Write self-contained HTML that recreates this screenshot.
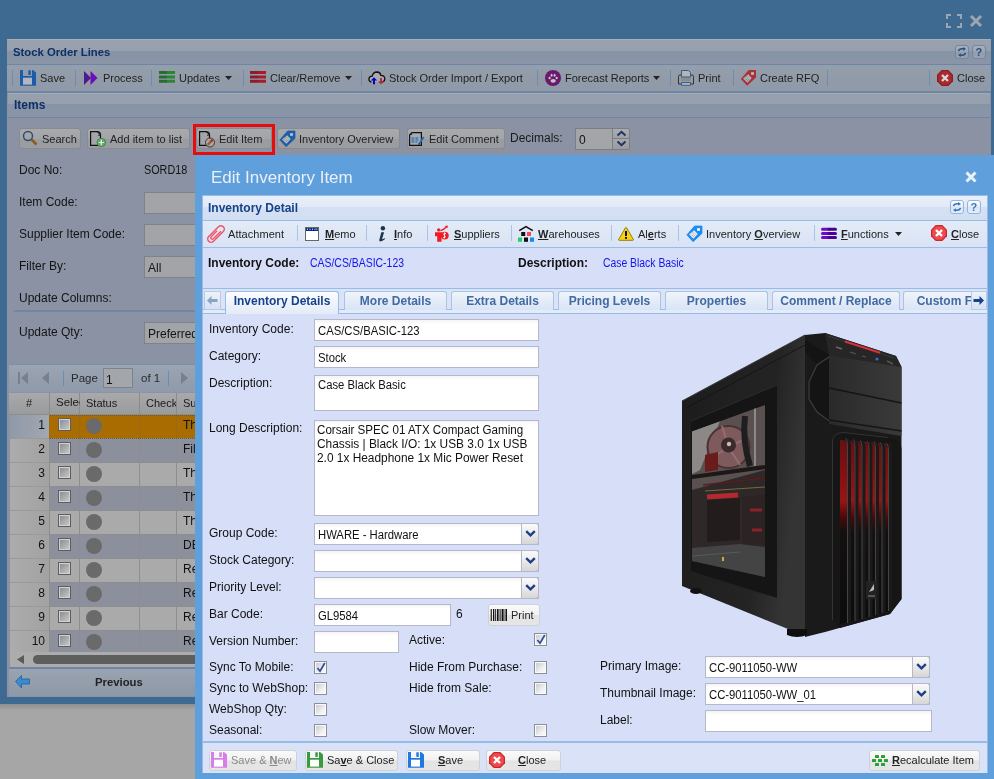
<!DOCTYPE html>
<html><head><meta charset="utf-8"><style>
*{margin:0;padding:0;box-sizing:border-box}
html,body{width:994px;height:779px;overflow:hidden;background:#a6a6a6;font-family:"Liberation Sans",sans-serif}
body{will-change:transform}
div{position:absolute}
.t{white-space:pre}
svg{position:absolute;overflow:visible}
.ul{text-decoration:underline;font-weight:bold}
</style></head>
<body>
<div style="left:0px;top:0px;width:994px;height:704px;background:#3e6a92"></div>
<svg style="left:946px;top:14px" width="16" height="14" viewBox="0 0 16 14"><path d="M1 5V1h4M11 1h4v4M15 9v4h-4M5 13H1V9" fill="none" stroke="#9ba6b1" stroke-width="2"/></svg>
<svg style="left:969px;top:14px" width="14" height="14" viewBox="0 0 14 14"><path d="M2 2L12 12M12 2L2 12" stroke="#9ba6b1" stroke-width="3"/></svg>
<div style="left:7px;top:39px;width:984px;height:658px;background:#8a92a4;border-top:1px solid #a8aeb6"></div>
<div style="left:7px;top:40px;width:984px;height:25px;background:linear-gradient(#98a1ad 0,#97a0ac 45%,#8592a6 46%,#8794a6 52%,#8a96a8 100%);border-bottom:1px solid #6c86a9"></div>
<div class="t" style="left:13px;top:46.93px;font-size:11.3px;line-height:11.3px;color:#0f2f66;font-weight:bold;">Stock Order Lines</div>
<div style="left:955px;top:45px;width:14px;height:14px;background:linear-gradient(#a9b0ba,#9aa3af 50%,#929cab 51%,#98a2b0);border:1px solid #6f88aa;border-radius:3px"></div>
<svg style="left:957px;top:47px" width="10" height="10" viewBox="0 0 10 10"><path d="M1.5 4.2Q2 1.8 5 1.8H7" fill="none" stroke="#2d4f7c" stroke-width="1.5"/><path d="M6.2 0L9 1.9L6.2 3.8Z" fill="#2d4f7c"/><path d="M8.5 5.8Q8 8.2 5 8.2H3" fill="none" stroke="#2d4f7c" stroke-width="1.5"/><path d="M3.8 6.2L1 8.1L3.8 10Z" fill="#2d4f7c"/></svg>
<div style="left:972px;top:45px;width:14px;height:14px;background:linear-gradient(#a9b0ba,#9aa3af 50%,#929cab 51%,#98a2b0);border:1px solid #6f88aa;border-radius:3px"></div>
<div class="t" style="left:975.5px;top:47.19px;font-size:11px;line-height:11px;color:#2d4f7c;font-weight:bold;">?</div>
<div style="left:7px;top:65px;width:984px;height:28px;background:linear-gradient(#959eab,#8f99a7);border-bottom:2px solid #6c86a9"></div>
<div style="left:12px;top:70px;width:1px;height:16px;background:#6c8cb2"></div>
<div style="left:75px;top:70px;width:1px;height:16px;background:#6c8cb2"></div>
<div style="left:151px;top:70px;width:1px;height:16px;background:#6c8cb2"></div>
<div style="left:243px;top:70px;width:1px;height:16px;background:#6c8cb2"></div>
<div style="left:361px;top:70px;width:1px;height:16px;background:#6c8cb2"></div>
<div style="left:537px;top:70px;width:1px;height:16px;background:#6c8cb2"></div>
<div style="left:670px;top:70px;width:1px;height:16px;background:#6c8cb2"></div>
<div style="left:733px;top:70px;width:1px;height:16px;background:#6c8cb2"></div>
<div style="left:827px;top:70px;width:1px;height:16px;background:#6c8cb2"></div>
<div style="left:929px;top:70px;width:1px;height:16px;background:#6c8cb2"></div>
<svg style="left:20px;top:70px" width="16" height="16" viewBox="0 0 16 16"><rect x="3" y="7.5" width="9.5" height="7" fill="#b3b6bc"/><path d="M0 0H3V6H12V0H13L16 2.6V15.8H0Z" fill="#1c5ca8"/><rect x="3" y="7.7" width="9" height="6.9" fill="#b3b6bc"/><rect x="8.3" y="0.3" width="2.5" height="4.6" fill="#1c5ca8"/></svg>
<div class="t" style="left:40px;top:72.69px;font-size:11px;line-height:11px;color:#222;font-weight:normal;">Save</div>
<svg style="left:84px;top:71px" width="14" height="15" viewBox="0 0 14 15"><path d="M0 0L7 7L0 14Z" fill="#4a1c8c"/><path d="M6.5 0L13.5 7L6.5 14Z" fill="#6e0eb8"/></svg>
<div class="t" style="left:103px;top:72.69px;font-size:11px;line-height:11px;color:#222;font-weight:normal;">Process</div>
<svg style="left:159px;top:71px" width="16" height="14" viewBox="0 0 16 14"><g stroke-width="3"><path d="M0 1.5H8M0 5.9H8M0 10.3H8" stroke="#2b6a33"/><path d="M8 1.5H16M8 5.9H16M8 10.3H16" stroke="#2a8630"/></g></svg>
<div class="t" style="left:179px;top:72.69px;font-size:11px;line-height:11px;color:#222;font-weight:normal;">Updates</div>
<svg style="left:225px;top:76px" width="7" height="4" viewBox="0 0 7 4"><path d="M0 0h7L3.5 4z" fill="#222"/></svg>
<svg style="left:250px;top:71px" width="16" height="14" viewBox="0 0 16 14"><g stroke-width="3"><path d="M0 1.5H8M0 5.9H8M0 10.3H8" stroke="#8a1c2c"/><path d="M8 1.5H16M8 5.9H16M8 10.3H16" stroke="#a81c2a"/></g></svg>
<div class="t" style="left:270px;top:72.69px;font-size:11px;line-height:11px;color:#222;font-weight:normal;">Clear/Remove</div>
<svg style="left:345px;top:76px" width="7" height="4" viewBox="0 0 7 4"><path d="M0 0h7L3.5 4z" fill="#222"/></svg>
<svg style="left:368px;top:71px" width="18" height="14" viewBox="0 0 18 14"><path d="M3.5 11Q0.5 10.5 1 7.5Q1.6 5 4.2 5.2Q5 1 9 1Q12.4 1.2 12.8 4.3Q16.6 4.3 16.8 7.8Q16.8 10.8 14 11" fill="#a9abb0" stroke="#111" stroke-width="1.3"/><path d="M6 13.2V8.5" stroke="#0000c8" stroke-width="2"/><path d="M2.8 9.5L6 6.3L9.2 9.5Z" fill="#0000c8"/><path d="M13 7V11" stroke="#b03038" stroke-width="2"/><path d="M9.8 10.2L13 13.4L16.2 10.2Z" fill="#b03038"/></svg>
<div class="t" style="left:389px;top:72.69px;font-size:11px;line-height:11px;color:#222;font-weight:normal;">Stock Order Import / Export</div>
<svg style="left:545px;top:70px" width="16" height="16" viewBox="0 0 16 16"><circle cx="8" cy="8" r="8" fill="#6a1a6c"/><ellipse cx="8.2" cy="10.8" rx="2.6" ry="1.9" fill="#c9c3cb"/><ellipse cx="4.6" cy="8" rx="1.1" ry="1.3" fill="#c9c3cb"/><ellipse cx="6.6" cy="5.3" rx="1" ry="1.5" fill="#c9c3cb"/><ellipse cx="9.6" cy="5.3" rx="1" ry="1.5" fill="#c9c3cb"/><ellipse cx="11.7" cy="8" rx="1.1" ry="1.3" fill="#c9c3cb"/></svg>
<div class="t" style="left:565px;top:72.69px;font-size:11px;line-height:11px;color:#222;font-weight:normal;">Forecast Reports</div>
<svg style="left:653px;top:76px" width="7" height="4" viewBox="0 0 7 4"><path d="M0 0h7L3.5 4z" fill="#222"/></svg>
<svg style="left:678px;top:70px" width="16" height="16" viewBox="0 0 16 16"><path d="M0.5 6.5Q0.5 5 2 5H14Q15.5 5 15.5 6.5V14H0.5Z" fill="#9a9ca0" stroke="#333" stroke-width="1"/><rect x="3" y="7" width="10" height="4" fill="#8a8c90"/><path d="M3.5 0.5H10.5L12.5 2.5V7H3.5Z" fill="#b4b4b4" stroke="#2f5f9a" stroke-width="1"/><path d="M3.5 12.5H12.5V15.3H3.5Z" fill="#b4b4b4" stroke="#2f5f9a" stroke-width="1"/></svg>
<div class="t" style="left:698px;top:72.69px;font-size:11px;line-height:11px;color:#222;font-weight:normal;">Print</div>
<svg style="left:740px;top:69px" width="17" height="17" viewBox="0 0 17 17"><path d="M8.6 1H16V8.4L7.1 16.7L0.9 9.9Z" fill="#a8323a"/><rect x="11.1" y="3.2" width="2.8" height="2.6" fill="#b8c0c6"/><path d="M8.2 5.3L11.7 9L7.4 13.8L3.1 9.5Z" fill="#b0b8be"/><path d="M5 9.5l3-3M6 10.8l3-3M7 12l3-3" stroke="#555" stroke-width="0.8" stroke-dasharray="1 1"/></svg>
<div class="t" style="left:760px;top:72.69px;font-size:11px;line-height:11px;color:#222;font-weight:normal;">Create RFQ</div>
<svg style="left:937px;top:70px" width="16" height="16" viewBox="0 0 16 16"><path d="M4.7 0h6.6L16 4.7v6.6L11.3 16H4.7L0 11.3V4.7z" fill="#8e1e22"/><path d="M5.2 1.3h5.6l3.9 3.9v5.6l-3.9 3.9H5.2l-3.9-3.9V5.2z" fill="#a82a2e"/><path d="M5 5l6 6M11 5l-6 6" stroke="#d8d8d8" stroke-width="2.4"/></svg>
<div class="t" style="left:957px;top:72.69px;font-size:11px;line-height:11px;color:#222;font-weight:normal;">Close</div>
<div style="left:8px;top:93px;width:982px;height:25px;background:linear-gradient(#a5abb3 0,#a5abb3 4%,#97a0ac 5%,#96a0ac 44%,#8592a6 45%,#8794a6 50%,#8a96a8 100%);border-bottom:1px solid #6c86a9"></div>
<div class="t" style="left:14px;top:99.34px;font-size:12px;line-height:12px;color:#0f2f66;font-weight:bold;">Items</div>
<div style="left:19px;top:128px;width:62px;height:21px;background:linear-gradient(#a7a9ad 0,#a3a5a9 50%,#9a9ca0 51%,#9b9da1 100%);border:1px solid #878b92;border-radius:3px"></div>
<svg style="left:22px;top:130px" width="16" height="16" viewBox="0 0 16 16"><circle cx="6" cy="6" r="4.5" fill="none" stroke="#2f4f70" stroke-width="1.5"/><path d="M9.5 9.5L14.5 14.5" stroke="#8a5a22" stroke-width="2.5"/></svg>
<div class="t" style="left:42px;top:133.69px;font-size:11px;line-height:11px;color:#222;font-weight:normal;">Search</div>
<div style="left:87px;top:128px;width:103px;height:21px;background:linear-gradient(#a7a9ad 0,#a3a5a9 50%,#9a9ca0 51%,#9b9da1 100%);border:1px solid #878b92;border-radius:3px"></div>
<svg style="left:90px;top:131px" width="17" height="17" viewBox="0 0 17 17"><path d="M0.6 0.6H7.5L10.5 3.6V14.4H0.6Z" fill="#a3a5a9" stroke="#111" stroke-width="1.2"/><path d="M7.5 1.2Q10.8 0 10.2 3.4Q9.5 5 8.2 4.2" fill="none" stroke="#111" stroke-width="1"/><circle cx="11.3" cy="11.5" r="4.6" fill="#2a8a3a"/><circle cx="11.3" cy="11.5" r="3.3" fill="none" stroke="#b8c8b8" stroke-width="0.6"/><path d="M11.3 8.8v5.4M8.6 11.5h5.4" stroke="#dde5dd" stroke-width="1.7"/></svg>
<div class="t" style="left:110px;top:133.69px;font-size:11px;line-height:11px;color:#222;font-weight:normal;">Add item to list</div>
<div style="left:196px;top:128px;width:76px;height:21px;background:linear-gradient(#a7a9ad 0,#a3a5a9 50%,#9a9ca0 51%,#9b9da1 100%);border:1px solid #878b92;border-radius:3px"></div>
<svg style="left:199px;top:131px" width="17" height="17" viewBox="0 0 17 17"><path d="M0.6 0.6H7.5L10.5 3.6V14.4H0.6Z" fill="#a3a5a9" stroke="#111" stroke-width="1.2"/><path d="M7.5 1.2Q10.8 0 10.2 3.4Q9.5 5 8.2 4.2" fill="none" stroke="#111" stroke-width="1"/><circle cx="11" cy="11.5" r="4.5" fill="#a6a8ac" stroke="#4a3030" stroke-width="1"/><path d="M8.8 13.8L12.8 9.6" stroke="#9a5a20" stroke-width="2.2"/><path d="M12 10.4L13.6 8.8" stroke="#c02020" stroke-width="2.2"/></svg>
<div class="t" style="left:219px;top:133.69px;font-size:11px;line-height:11px;color:#222;font-weight:normal;">Edit Item</div>
<div style="left:193px;top:124px;width:82px;height:31px;border:3px solid #ea0b0b"></div>
<div style="left:277px;top:128px;width:123px;height:21px;background:linear-gradient(#a7a9ad 0,#a3a5a9 50%,#9a9ca0 51%,#9b9da1 100%);border:1px solid #878b92;border-radius:3px"></div>
<svg style="left:279px;top:130px" width="17" height="17" viewBox="0 0 17 17"><path d="M8.6 1H16V8.4L7.1 16.7L0.9 9.9Z" fill="#1f5ea8" stroke="#1f5ea8" stroke-width="0.8" stroke-linejoin="round"/><rect x="11.1" y="3.2" width="2.8" height="2.6" fill="#c0c4c8"/><path d="M8.2 5.3L11.7 9L7.4 13.8L3.1 9.5Z" fill="#b8bcc0"/><path d="M5 9.5l3-3M6 10.8l3-3M7 12l3-3" stroke="#6a6a6a" stroke-width="0.8" stroke-dasharray="1 1"/></svg>
<div class="t" style="left:299px;top:133.69px;font-size:11px;line-height:11px;color:#222;font-weight:normal;">Inventory Overview</div>
<div style="left:407px;top:128px;width:98px;height:21px;background:linear-gradient(#a7a9ad 0,#a3a5a9 50%,#9a9ca0 51%,#9b9da1 100%);border:1px solid #878b92;border-radius:3px"></div>
<svg style="left:409px;top:132px" width="16" height="14" viewBox="0 0 16 14"><path d="M3 0.6H12.4V13.4H0.6V3Z" fill="#a8aaae" stroke="#111" stroke-width="1.2"/><path d="M0.6 3H3V0.6Z" fill="#222"/><g fill="#1f6fc0"><rect x="2.4" y="5.4" width="3" height="1.2"/><rect x="6.4" y="5.4" width="3" height="1.2"/><rect x="2.4" y="7.4" width="3" height="1.2"/><rect x="6.4" y="7.4" width="3" height="1.2"/><rect x="2.4" y="9.4" width="3" height="1.2"/><rect x="6.4" y="9.4" width="2" height="1.2"/></g><path d="M10.3 11.6L14.8 5" stroke="#1f6fc0" stroke-width="1.8"/><circle cx="10.1" cy="12" r="0.8" fill="#111"/></svg>
<div class="t" style="left:429px;top:133.69px;font-size:11px;line-height:11px;color:#222;font-weight:normal;">Edit Comment</div>
<div class="t" style="left:510px;top:131.84px;font-size:12px;line-height:12px;color:#1a1a1a;font-weight:normal;">Decimals:</div>
<div style="left:575px;top:128px;width:38px;height:22px;background:#a4a5a8;border:1px solid #7b7e84"></div>
<div class="t" style="left:579px;top:133.84px;font-size:12px;line-height:12px;color:#111;font-weight:normal;">0</div>
<div style="left:612px;top:128px;width:18px;height:11px;background:linear-gradient(#abadb1,#9fa1a5);border:1px solid #7b7e84;border-radius:0 2px 0 0"></div>
<div style="left:612px;top:138px;width:18px;height:12px;background:linear-gradient(#a5a7ab,#9a9ca0);border:1px solid #7b7e84;border-radius:0 0 2px 0"></div>
<svg style="left:616px;top:130px" width="11" height="18" viewBox="0 0 11 18"><path d="M1.5 5.5L5.5 1.8L9.5 5.5M1.5 11.5L5.5 15.2L9.5 11.5" fill="none" stroke="#1f3466" stroke-width="2"/></svg>
<div class="t" style="left:19px;top:163.84px;font-size:12px;line-height:12px;color:#141414;font-weight:normal;">Doc No:</div>
<div class="t" style="left:144px;top:163.84px;font-size:12px;line-height:12px;color:#141414;font-weight:normal;transform:scaleX(0.9);transform-origin:0 0;">SORD18</div>
<div class="t" style="left:19px;top:195.84px;font-size:12px;line-height:12px;color:#141414;font-weight:normal;">Item Code:</div>
<div style="left:144px;top:192px;width:60px;height:22px;background:#a2a4a8;border:1px solid #7f8389"></div>
<div class="t" style="left:19px;top:227.84px;font-size:12px;line-height:12px;color:#141414;font-weight:normal;">Supplier Item Code:</div>
<div style="left:144px;top:224px;width:60px;height:22px;background:#a2a4a8;border:1px solid #7f8389"></div>
<div class="t" style="left:19px;top:259.84px;font-size:12px;line-height:12px;color:#141414;font-weight:normal;">Filter By:</div>
<div style="left:144px;top:256px;width:60px;height:22px;background:#a2a4a8;border:1px solid #7f8389"></div>
<div class="t" style="left:148px;top:261.84px;font-size:12px;line-height:12px;color:#141414;font-weight:normal;">All</div>
<div class="t" style="left:19px;top:291.84px;font-size:12px;line-height:12px;color:#141414;font-weight:normal;">Update Columns:</div>
<div style="left:14px;top:310px;width:185px;height:2px;background:#6f86a6"></div>
<div class="t" style="left:19px;top:325.84px;font-size:12px;line-height:12px;color:#141414;font-weight:normal;">Update Qty:</div>
<div style="left:144px;top:322px;width:60px;height:22px;background:#a2a4a8;border:1px solid #7f8389"></div>
<div class="t" style="left:148px;top:327.84px;font-size:12px;line-height:12px;color:#141414;font-weight:normal;">Preferred</div>
<div style="left:9px;top:364px;width:190px;height:28px;background:linear-gradient(#9aa4b2,#8f9aaa);border-top:1px solid #7c90ab"></div>
<svg style="left:18px;top:371px" width="11" height="14" viewBox="0 0 11 14"><rect x="0" y="1" width="2" height="12" fill="#77808c"/><path d="M10 1v12L3 7z" fill="#77808c"/></svg>
<svg style="left:42px;top:371px" width="8" height="14" viewBox="0 0 8 14"><path d="M7 1v12L0 7z" fill="#77808c"/></svg>
<div style="left:63px;top:371px;width:1px;height:15px;background:#6c8cb2"></div>
<div class="t" style="left:71px;top:372.77px;font-size:11.5px;line-height:11.5px;color:#2a2a2a;font-weight:normal;">Page</div>
<div style="left:103px;top:368px;width:30px;height:20px;background:#a3a6ab;border:1px solid #7f8389"></div>
<div class="t" style="left:106px;top:373.84px;font-size:12px;line-height:12px;color:#111;font-weight:normal;">1</div>
<div class="t" style="left:141px;top:372.77px;font-size:11.5px;line-height:11.5px;color:#2a2a2a;font-weight:normal;">of 1</div>
<div style="left:168px;top:371px;width:1px;height:15px;background:#6c8cb2"></div>
<svg style="left:181px;top:371px" width="8" height="14" viewBox="0 0 8 14"><path d="M0 1v12L7 7z" fill="#77808c"/></svg>
<div style="left:9px;top:392px;width:190px;height:23px;background:linear-gradient(#a9a9aa,#9a9b9d);border-top:1px solid #8a94a6;border-bottom:1px solid #8d8d8d"></div>
<div style="left:49px;top:393px;width:1px;height:22px;background:#8b8b8b"></div>
<div style="left:79px;top:393px;width:1px;height:22px;background:#8b8b8b"></div>
<div style="left:139px;top:393px;width:1px;height:22px;background:#8b8b8b"></div>
<div style="left:176px;top:393px;width:1px;height:22px;background:#8b8b8b"></div>
<div class="t" style="left:26px;top:397.69px;font-size:11px;line-height:11px;color:#1a1a1a;font-weight:normal;">#</div>
<div class="t" style="left:56px;top:397.27px;font-size:11.5px;line-height:11.5px;color:#1a1a1a;font-weight:normal;width:24px;text-align:left;overflow:hidden">Selec</div>
<div class="t" style="left:86px;top:397.69px;font-size:11px;line-height:11px;color:#1a1a1a;font-weight:normal;">Status</div>
<div class="t" style="left:146px;top:397.69px;font-size:11px;line-height:11px;color:#1a1a1a;font-weight:normal;width:30px;text-align:left;overflow:hidden">Check</div>
<div class="t" style="left:183px;top:397.69px;font-size:11px;line-height:11px;color:#1a1a1a;font-weight:normal;">Su</div>
<div style="left:10px;top:415px;width:189px;height:237px;overflow:hidden">
<div style="left:0;top:0px;width:189px;height:24px;background:#a86c00;border-bottom:1px solid #8e8e8e"></div>
<div style="left:0;top:0px;width:39px;height:24px;background:linear-gradient(90deg,#8f99a9,#a3a8b0);border-bottom:1px solid #9a9a9a"></div>
<div class="t" style="left:0;top:4px;width:35px;text-align:right;font-size:12px;line-height:12px;color:#111">1</div>
<div style="left:39px;top:0px;width:1px;height:24px;background:#9a6a1a"></div>
<div style="left:69px;top:0px;width:1px;height:24px;background:#9a6a1a"></div>
<div style="left:129px;top:0px;width:1px;height:24px;background:#9a6a1a"></div>
<div style="left:166px;top:0px;width:1px;height:24px;background:#9a6a1a"></div>
<div style="left:48px;top:3px;width:13px;height:13px;background:#dadada;border:1px solid #5e5e5e;box-shadow:inset 0 0 0 1px #d0d0d0"></div>
<div style="left:50px;top:5px;width:9px;height:9px;background:linear-gradient(135deg,#8a8d92,#c4c6c9)"></div>
<div style="left:76px;top:3px;width:16px;height:16px;background:#6a6a6a;border-radius:50%"></div>
<div class="t" style="left:173px;top:4px;font-size:12px;line-height:12px;color:#111">Th</div>
<div style="left:0;top:24px;width:189px;height:24px;background:#8b909c;border-bottom:1px solid #8e8e8e"></div>
<div style="left:0;top:24px;width:39px;height:24px;background:linear-gradient(90deg,#acacac,#a2a2a2);border-bottom:1px solid #9a9a9a"></div>
<div class="t" style="left:0;top:28px;width:35px;text-align:right;font-size:12px;line-height:12px;color:#111">2</div>
<div style="left:39px;top:24px;width:1px;height:24px;background:#8e8e8e"></div>
<div style="left:69px;top:24px;width:1px;height:24px;background:#8e8e8e"></div>
<div style="left:129px;top:24px;width:1px;height:24px;background:#8e8e8e"></div>
<div style="left:166px;top:24px;width:1px;height:24px;background:#8e8e8e"></div>
<div style="left:48px;top:27px;width:13px;height:13px;background:#dadada;border:1px solid #5e5e5e;box-shadow:inset 0 0 0 1px #d0d0d0"></div>
<div style="left:50px;top:29px;width:9px;height:9px;background:linear-gradient(135deg,#8a8d92,#c4c6c9)"></div>
<div style="left:76px;top:27px;width:16px;height:16px;background:#6a6a6a;border-radius:50%"></div>
<div class="t" style="left:173px;top:28px;font-size:12px;line-height:12px;color:#111">Fil</div>
<div style="left:0;top:48px;width:189px;height:24px;background:#aaaaaa;border-bottom:1px solid #8e8e8e"></div>
<div style="left:0;top:48px;width:39px;height:24px;background:linear-gradient(90deg,#acacac,#a2a2a2);border-bottom:1px solid #9a9a9a"></div>
<div class="t" style="left:0;top:52px;width:35px;text-align:right;font-size:12px;line-height:12px;color:#111">3</div>
<div style="left:39px;top:48px;width:1px;height:24px;background:#8e8e8e"></div>
<div style="left:69px;top:48px;width:1px;height:24px;background:#8e8e8e"></div>
<div style="left:129px;top:48px;width:1px;height:24px;background:#8e8e8e"></div>
<div style="left:166px;top:48px;width:1px;height:24px;background:#8e8e8e"></div>
<div style="left:48px;top:51px;width:13px;height:13px;background:#dadada;border:1px solid #5e5e5e;box-shadow:inset 0 0 0 1px #d0d0d0"></div>
<div style="left:50px;top:53px;width:9px;height:9px;background:linear-gradient(135deg,#8a8d92,#c4c6c9)"></div>
<div style="left:76px;top:51px;width:16px;height:16px;background:#6a6a6a;border-radius:50%"></div>
<div class="t" style="left:173px;top:52px;font-size:12px;line-height:12px;color:#111">Th</div>
<div style="left:0;top:72px;width:189px;height:24px;background:#8b909c;border-bottom:1px solid #8e8e8e"></div>
<div style="left:0;top:72px;width:39px;height:24px;background:linear-gradient(90deg,#acacac,#a2a2a2);border-bottom:1px solid #9a9a9a"></div>
<div class="t" style="left:0;top:76px;width:35px;text-align:right;font-size:12px;line-height:12px;color:#111">4</div>
<div style="left:39px;top:72px;width:1px;height:24px;background:#8e8e8e"></div>
<div style="left:69px;top:72px;width:1px;height:24px;background:#8e8e8e"></div>
<div style="left:129px;top:72px;width:1px;height:24px;background:#8e8e8e"></div>
<div style="left:166px;top:72px;width:1px;height:24px;background:#8e8e8e"></div>
<div style="left:48px;top:75px;width:13px;height:13px;background:#dadada;border:1px solid #5e5e5e;box-shadow:inset 0 0 0 1px #d0d0d0"></div>
<div style="left:50px;top:77px;width:9px;height:9px;background:linear-gradient(135deg,#8a8d92,#c4c6c9)"></div>
<div style="left:76px;top:75px;width:16px;height:16px;background:#6a6a6a;border-radius:50%"></div>
<div class="t" style="left:173px;top:76px;font-size:12px;line-height:12px;color:#111">Th</div>
<div style="left:0;top:96px;width:189px;height:24px;background:#aaaaaa;border-bottom:1px solid #8e8e8e"></div>
<div style="left:0;top:96px;width:39px;height:24px;background:linear-gradient(90deg,#acacac,#a2a2a2);border-bottom:1px solid #9a9a9a"></div>
<div class="t" style="left:0;top:100px;width:35px;text-align:right;font-size:12px;line-height:12px;color:#111">5</div>
<div style="left:39px;top:96px;width:1px;height:24px;background:#8e8e8e"></div>
<div style="left:69px;top:96px;width:1px;height:24px;background:#8e8e8e"></div>
<div style="left:129px;top:96px;width:1px;height:24px;background:#8e8e8e"></div>
<div style="left:166px;top:96px;width:1px;height:24px;background:#8e8e8e"></div>
<div style="left:48px;top:99px;width:13px;height:13px;background:#dadada;border:1px solid #5e5e5e;box-shadow:inset 0 0 0 1px #d0d0d0"></div>
<div style="left:50px;top:101px;width:9px;height:9px;background:linear-gradient(135deg,#8a8d92,#c4c6c9)"></div>
<div style="left:76px;top:99px;width:16px;height:16px;background:#6a6a6a;border-radius:50%"></div>
<div class="t" style="left:173px;top:100px;font-size:12px;line-height:12px;color:#111">Th</div>
<div style="left:0;top:120px;width:189px;height:24px;background:#8b909c;border-bottom:1px solid #8e8e8e"></div>
<div style="left:0;top:120px;width:39px;height:24px;background:linear-gradient(90deg,#acacac,#a2a2a2);border-bottom:1px solid #9a9a9a"></div>
<div class="t" style="left:0;top:124px;width:35px;text-align:right;font-size:12px;line-height:12px;color:#111">6</div>
<div style="left:39px;top:120px;width:1px;height:24px;background:#8e8e8e"></div>
<div style="left:69px;top:120px;width:1px;height:24px;background:#8e8e8e"></div>
<div style="left:129px;top:120px;width:1px;height:24px;background:#8e8e8e"></div>
<div style="left:166px;top:120px;width:1px;height:24px;background:#8e8e8e"></div>
<div style="left:48px;top:123px;width:13px;height:13px;background:#dadada;border:1px solid #5e5e5e;box-shadow:inset 0 0 0 1px #d0d0d0"></div>
<div style="left:50px;top:125px;width:9px;height:9px;background:linear-gradient(135deg,#8a8d92,#c4c6c9)"></div>
<div style="left:76px;top:123px;width:16px;height:16px;background:#6a6a6a;border-radius:50%"></div>
<div class="t" style="left:173px;top:124px;font-size:12px;line-height:12px;color:#111">DE</div>
<div style="left:0;top:144px;width:189px;height:24px;background:#aaaaaa;border-bottom:1px solid #8e8e8e"></div>
<div style="left:0;top:144px;width:39px;height:24px;background:linear-gradient(90deg,#acacac,#a2a2a2);border-bottom:1px solid #9a9a9a"></div>
<div class="t" style="left:0;top:148px;width:35px;text-align:right;font-size:12px;line-height:12px;color:#111">7</div>
<div style="left:39px;top:144px;width:1px;height:24px;background:#8e8e8e"></div>
<div style="left:69px;top:144px;width:1px;height:24px;background:#8e8e8e"></div>
<div style="left:129px;top:144px;width:1px;height:24px;background:#8e8e8e"></div>
<div style="left:166px;top:144px;width:1px;height:24px;background:#8e8e8e"></div>
<div style="left:48px;top:147px;width:13px;height:13px;background:#dadada;border:1px solid #5e5e5e;box-shadow:inset 0 0 0 1px #d0d0d0"></div>
<div style="left:50px;top:149px;width:9px;height:9px;background:linear-gradient(135deg,#8a8d92,#c4c6c9)"></div>
<div style="left:76px;top:147px;width:16px;height:16px;background:#6a6a6a;border-radius:50%"></div>
<div class="t" style="left:173px;top:148px;font-size:12px;line-height:12px;color:#111">Re</div>
<div style="left:0;top:168px;width:189px;height:24px;background:#8b909c;border-bottom:1px solid #8e8e8e"></div>
<div style="left:0;top:168px;width:39px;height:24px;background:linear-gradient(90deg,#acacac,#a2a2a2);border-bottom:1px solid #9a9a9a"></div>
<div class="t" style="left:0;top:172px;width:35px;text-align:right;font-size:12px;line-height:12px;color:#111">8</div>
<div style="left:39px;top:168px;width:1px;height:24px;background:#8e8e8e"></div>
<div style="left:69px;top:168px;width:1px;height:24px;background:#8e8e8e"></div>
<div style="left:129px;top:168px;width:1px;height:24px;background:#8e8e8e"></div>
<div style="left:166px;top:168px;width:1px;height:24px;background:#8e8e8e"></div>
<div style="left:48px;top:171px;width:13px;height:13px;background:#dadada;border:1px solid #5e5e5e;box-shadow:inset 0 0 0 1px #d0d0d0"></div>
<div style="left:50px;top:173px;width:9px;height:9px;background:linear-gradient(135deg,#8a8d92,#c4c6c9)"></div>
<div style="left:76px;top:171px;width:16px;height:16px;background:#6a6a6a;border-radius:50%"></div>
<div class="t" style="left:173px;top:172px;font-size:12px;line-height:12px;color:#111">Re</div>
<div style="left:0;top:192px;width:189px;height:24px;background:#aaaaaa;border-bottom:1px solid #8e8e8e"></div>
<div style="left:0;top:192px;width:39px;height:24px;background:linear-gradient(90deg,#acacac,#a2a2a2);border-bottom:1px solid #9a9a9a"></div>
<div class="t" style="left:0;top:196px;width:35px;text-align:right;font-size:12px;line-height:12px;color:#111">9</div>
<div style="left:39px;top:192px;width:1px;height:24px;background:#8e8e8e"></div>
<div style="left:69px;top:192px;width:1px;height:24px;background:#8e8e8e"></div>
<div style="left:129px;top:192px;width:1px;height:24px;background:#8e8e8e"></div>
<div style="left:166px;top:192px;width:1px;height:24px;background:#8e8e8e"></div>
<div style="left:48px;top:195px;width:13px;height:13px;background:#dadada;border:1px solid #5e5e5e;box-shadow:inset 0 0 0 1px #d0d0d0"></div>
<div style="left:50px;top:197px;width:9px;height:9px;background:linear-gradient(135deg,#8a8d92,#c4c6c9)"></div>
<div style="left:76px;top:195px;width:16px;height:16px;background:#6a6a6a;border-radius:50%"></div>
<div class="t" style="left:173px;top:196px;font-size:12px;line-height:12px;color:#111">Re</div>
<div style="left:0;top:216px;width:189px;height:24px;background:#8b909c;border-bottom:1px solid #8e8e8e"></div>
<div style="left:0;top:216px;width:39px;height:24px;background:linear-gradient(90deg,#acacac,#a2a2a2);border-bottom:1px solid #9a9a9a"></div>
<div class="t" style="left:0;top:220px;width:35px;text-align:right;font-size:12px;line-height:12px;color:#111">10</div>
<div style="left:39px;top:216px;width:1px;height:24px;background:#8e8e8e"></div>
<div style="left:69px;top:216px;width:1px;height:24px;background:#8e8e8e"></div>
<div style="left:129px;top:216px;width:1px;height:24px;background:#8e8e8e"></div>
<div style="left:166px;top:216px;width:1px;height:24px;background:#8e8e8e"></div>
<div style="left:48px;top:219px;width:13px;height:13px;background:#dadada;border:1px solid #5e5e5e;box-shadow:inset 0 0 0 1px #d0d0d0"></div>
<div style="left:50px;top:221px;width:9px;height:9px;background:linear-gradient(135deg,#8a8d92,#c4c6c9)"></div>
<div style="left:76px;top:219px;width:16px;height:16px;background:#6a6a6a;border-radius:50%"></div>
<div class="t" style="left:173px;top:220px;font-size:12px;line-height:12px;color:#111">Re</div>
</div>
<div style="left:50px;top:415px;width:149px;height:1px;border-top:1px dotted #6a5a3a"></div>
<div style="left:50px;top:438px;width:149px;height:1px;border-top:1px dotted #6a5a3a"></div>
<div style="left:10px;top:652px;width:189px;height:15px;background:#acacac"></div>
<svg style="left:17px;top:655px" width="7" height="9" viewBox="0 0 7 9"><path d="M7 0v9L0 4.5z" fill="#5a5a5a"/></svg>
<div style="left:33px;top:655px;width:166px;height:9px;background:#5e5e5e;border-radius:4.5px"></div>
<div style="left:9px;top:667px;width:190px;height:29px;background:linear-gradient(#9aa3af,#8d98a8);border-top:2px solid #6c86a9"></div>
<svg style="left:15px;top:674px" width="15" height="15" viewBox="0 0 15 15"><path d="M0.5 7.5l6-6v3.5h8v5h-8V14z" fill="#3a8ad0" stroke="#1f5f9f" stroke-width="0.8"/></svg>
<div class="t" style="left:95px;top:677.43px;font-size:11.3px;line-height:11.3px;color:#222;font-weight:bold;">Previous</div>
<div style="left:0px;top:704px;width:195px;height:6px;background:linear-gradient(#8e8e8e,#a6a6a6)"></div>
<div style="left:195px;top:155px;width:799px;height:624px;background:#5fa0dc"></div>
<div class="t" style="left:211px;top:168.61px;font-size:17px;line-height:17px;color:#e8eff8;font-weight:normal;">Edit Inventory Item</div>
<svg style="left:965px;top:171px" width="12" height="12" viewBox="0 0 12 12"><path d="M1.5 1.5l9 9M10.5 1.5l-9 9" stroke="#eaf1f9" stroke-width="3"/></svg>
<div style="left:202px;top:195px;width:786px;height:578px;background:#d7def7;border:1px solid #99bbe8"></div>
<div style="left:203px;top:196px;width:784px;height:25px;background:linear-gradient(#e8effa 0,#e2eaf7 44%,#d5e1f3 46%,#d2def1 100%);border-bottom:1px solid #99bbe8"></div>
<div class="t" style="left:208px;top:201.84px;font-size:12px;line-height:12px;color:#15428b;font-weight:bold;">Inventory Detail</div>
<div style="left:950px;top:200px;width:14px;height:14px;background:linear-gradient(#fdfeff,#e3ecf8 50%,#d8e5f6 51%,#e4eefa);border:1px solid #8fb4e6;border-radius:3px"></div>
<svg style="left:952px;top:202px" width="10" height="10" viewBox="0 0 10 10"><path d="M1.5 4.2Q2 1.8 5 1.8H7" fill="none" stroke="#3f73b6" stroke-width="1.5"/><path d="M6.2 0L9 1.9L6.2 3.8Z" fill="#3f73b6"/><path d="M8.5 5.8Q8 8.2 5 8.2H3" fill="none" stroke="#3f73b6" stroke-width="1.5"/><path d="M3.8 6.2L1 8.1L3.8 10Z" fill="#3f73b6"/></svg>
<div style="left:967px;top:200px;width:14px;height:14px;background:linear-gradient(#fdfeff,#e3ecf8 50%,#d8e5f6 51%,#e4eefa);border:1px solid #8fb4e6;border-radius:3px"></div>
<div class="t" style="left:970.5px;top:202.19px;font-size:11px;line-height:11px;color:#3f73b6;font-weight:bold;">?</div>
<div style="left:203px;top:221px;width:784px;height:27px;background:linear-gradient(#e3ebf7,#d9e3f4);border-bottom:1px solid #99bbe8"></div>
<div style="left:297px;top:225px;width:1px;height:16px;background:#a9c3e6"></div>
<div style="left:366px;top:225px;width:1px;height:16px;background:#a9c3e6"></div>
<div style="left:427px;top:225px;width:1px;height:16px;background:#a9c3e6"></div>
<div style="left:511px;top:225px;width:1px;height:16px;background:#a9c3e6"></div>
<div style="left:611px;top:225px;width:1px;height:16px;background:#a9c3e6"></div>
<div style="left:678px;top:225px;width:1px;height:16px;background:#a9c3e6"></div>
<div style="left:814px;top:225px;width:1px;height:16px;background:#a9c3e6"></div>
<svg style="left:206px;top:224px" width="20" height="20" viewBox="0 0 20 20"><g transform="rotate(45 10 10)"><rect x="6.6" y="-0.3" width="6.8" height="20.6" rx="3.4" fill="none" stroke="#f25566" stroke-width="1.5"/><path d="M8.5 7V15.3a1.5 1.5 0 0 0 3 0V4.5" fill="none" stroke="#f25566" stroke-width="1.4"/></g></svg>
<div class="t" style="left:228px;top:228.69px;font-size:11px;line-height:11px;color:#222;font-weight:normal;letter-spacing:0.05px">Attachment</div>
<svg style="left:305px;top:227px" width="14" height="14" viewBox="0 0 14 14"><rect x="0.5" y="0.5" width="13" height="13" fill="#fff" stroke="#666" stroke-width="1"/><rect x="1" y="1" width="12" height="3" fill="#062a86"/><path d="M2.5 1.5v1.5M5 1.5v1.5M7.5 1.5v1.5M10 1.5v1.5M11.8 1.5v1.5" stroke="#c8d0e8" stroke-width="0.9"/></svg>
<div class="t" style="left:325px;top:228.69px;font-size:11px;line-height:11px;color:#222;font-weight:normal;"><span class="ul">M</span>emo</div>
<svg style="left:377px;top:225px" width="10" height="18" viewBox="0 0 10 18"><circle cx="5.9" cy="3.3" r="2.2" fill="#1f344c"/><path d="M4.3 7.3H7.1L5 14.2Q6.6 13.7 8 12.9L7.6 14.6Q5.1 16.6 3.1 16.4Q1.9 16.1 2.4 14.4Z" fill="#1f344c"/></svg>
<div class="t" style="left:394px;top:228.69px;font-size:11px;line-height:11px;color:#222;font-weight:normal;"><span class="ul">I</span>nfo</div>
<svg style="left:434px;top:225px" width="16" height="18" viewBox="0 0 16 18"><circle cx="4.7" cy="4.9" r="1.7" fill="#ee1c24"/><path d="M1 7.3H8.2V11.2H7.5V16.8H3.2V11.2H1Z" fill="#ee1c24"/><circle cx="10.8" cy="10.6" r="3.9" fill="#ee1c24"/><path d="M12 8.6Q10.9 7.9 10 8.4Q9.2 9 10.3 10.4Q11.6 11.5 10.8 12.4Q9.9 13 9 12.4M10.6 7.5V13.6" stroke="#fff" stroke-width="0.9" fill="none"/><path d="M6.5 5.6L9.8 4.2L12.2 2" stroke="#ee1c24" stroke-width="1.5" fill="none"/><path d="M10.8 1L13.8 0.4L13.4 3.5Z" fill="#ee1c24"/></svg>
<div class="t" style="left:454px;top:228.69px;font-size:11px;line-height:11px;color:#222;font-weight:normal;"><span class="ul">S</span>uppliers</div>
<svg style="left:518px;top:226px" width="17" height="17" viewBox="0 0 17 17"><path d="M1.2 4.6L8 0.6L14.8 4.6" stroke="#111" stroke-width="1.6" fill="none"/><rect x="3.2" y="6" width="4" height="4" fill="#111"/><rect x="9" y="6" width="4" height="4" fill="#f24a58"/><rect x="0" y="11.5" width="4" height="4.3" fill="#22d070"/><rect x="6" y="11.5" width="4" height="4.3" fill="#111"/><rect x="12" y="11.5" width="4" height="4.3" fill="#1a8cf0"/></svg>
<div class="t" style="left:538px;top:228.69px;font-size:11px;line-height:11px;color:#222;font-weight:normal;"><span class="ul">W</span>arehouses</div>
<svg style="left:618px;top:227px" width="16" height="14" viewBox="0 0 16 14"><path d="M7.5 0.7Q8 0.2 8.5 0.7L15.4 12.5Q15.6 13.3 14.8 13.3H1.2Q0.4 13.3 0.6 12.5Z" fill="#f8d210" stroke="#8a7400" stroke-width="0.9"/><path d="M8 4v5" stroke="#111" stroke-width="2"/><rect x="7" y="10" width="2" height="1.8" fill="#111"/></svg>
<div class="t" style="left:638px;top:228.69px;font-size:11px;line-height:11px;color:#222;font-weight:normal;">Al<span class="ul">e</span>rts</div>
<svg style="left:686px;top:225px" width="17" height="17" viewBox="0 0 17 17"><path d="M8.6 1H16V8.4L7.1 16.7L0.9 9.9Z" fill="#1a8cf5" stroke="#1a8cf5" stroke-width="0.8" stroke-linejoin="round"/><rect x="11.1" y="3.2" width="2.8" height="2.6" fill="#fff"/><path d="M8.2 5.3L11.7 9L7.4 13.8L3.1 9.5Z" fill="#ececec"/><path d="M5 9.5l3-3M6 10.8l3-3M7 12l3-3" stroke="#888" stroke-width="0.8" stroke-dasharray="1 1"/></svg>
<div class="t" style="left:706px;top:228.69px;font-size:11px;line-height:11px;color:#222;font-weight:normal;">Inventory <span class="ul">O</span>verview</div>
<svg style="left:821px;top:227px" width="16" height="14" viewBox="0 0 16 14"><g stroke-linecap="round" stroke-width="3"><path d="M1.5 2.3H8M1.5 6.5H8M1.5 10.6H8" stroke="#6c0cbc"/><path d="M8 2.3H14.5M8 6.5H14.5M8 10.6H14.5" stroke="#4b0094"/></g></svg>
<div class="t" style="left:841px;top:228.69px;font-size:11px;line-height:11px;color:#222;font-weight:normal;"><span class="ul">F</span>unctions</div>
<svg style="left:895px;top:232px" width="7" height="4" viewBox="0 0 7 4"><path d="M0 0h7L3.5 4z" fill="#222"/></svg>
<svg style="left:931px;top:225px" width="16" height="16" viewBox="0 0 16 16"><path d="M4.7 0h6.6L16 4.7v6.6L11.3 16H4.7L0 11.3V4.7z" fill="#c8282d"/><path d="M5.2 1.3h5.6l3.9 3.9v5.6l-3.9 3.9H5.2l-3.9-3.9V5.2z" fill="#ef4a4e"/><path d="M5 5l6 6M11 5l-6 6" stroke="#fff" stroke-width="2.4"/></svg>
<div class="t" style="left:951px;top:228.69px;font-size:11px;line-height:11px;color:#222;font-weight:normal;"><span class="ul">C</span>lose</div>
<div class="t" style="left:208px;top:256.84px;font-size:12px;line-height:12px;color:#111;font-weight:bold;">Inventory Code:</div>
<div class="t" style="left:310px;top:256.84px;font-size:12px;line-height:12px;color:#1414ea;font-weight:normal;transform:scaleX(0.87);transform-origin:0 0;">CAS/CS/BASIC-123</div>
<div class="t" style="left:518px;top:256.84px;font-size:12px;line-height:12px;color:#111;font-weight:bold;">Description:</div>
<div class="t" style="left:602.5px;top:256.84px;font-size:12px;line-height:12px;color:#1414ea;font-weight:normal;transform:scaleX(0.865);transform-origin:0 0;">Case Black Basic</div>
<div style="left:203px;top:288px;width:784px;height:26px;background:#dbe4f6;border-top:1px solid #99bbe8;border-bottom:1px solid #99bbe8"></div>
<div style="left:203px;top:309px;width:784px;height:4px;background:#e3ebf8;border-top:1px solid #99bbe8"></div>
<div style="left:204px;top:291px;width:17px;height:19px;background:linear-gradient(#edf2fa,#d6e1f3);border:1px solid #b5cbe9"></div>
<svg style="left:207px;top:296px" width="11" height="9" viewBox="0 0 11 9"><path d="M0 4.5L4.5 0v3h6v3h-6v3z" fill="#8aa3c4"/></svg>
<div style="left:971px;top:291px;width:16px;height:19px;background:linear-gradient(#edf2fa,#d6e1f3);border:1px solid #b5cbe9"></div>
<svg style="left:973px;top:296px" width="11" height="9" viewBox="0 0 11 9"><path d="M11 4.5L6.5 0v3h-6v3h6v3z" fill="#15428b"/></svg>
<div style="left:203px;top:288px;width:768px;height:26px;overflow:hidden">
<div style="left:22px;top:3px;width:114px;height:23px;background:linear-gradient(#fbfcfe,#e3ebf8);border:1px solid #99bbe8;border-bottom:none;border-radius:3px 3px 0 0"></div>
<div class="t" style="left:22px;top:6px;width:114px;text-align:center;font-size:12px;line-height:14px;font-weight:bold;color:#15428b">Inventory Details</div>
<div style="left:141px;top:3px;width:103px;height:19px;background:linear-gradient(#f0f4fb,#d9e4f5);border:1px solid #a9c3e6;border-bottom:none;border-radius:3px 3px 0 0"></div>
<div class="t" style="left:141px;top:6px;width:103px;text-align:center;font-size:12px;line-height:14px;font-weight:bold;color:#416aa3">More Details</div>
<div style="left:248px;top:3px;width:103px;height:19px;background:linear-gradient(#f0f4fb,#d9e4f5);border:1px solid #a9c3e6;border-bottom:none;border-radius:3px 3px 0 0"></div>
<div class="t" style="left:248px;top:6px;width:103px;text-align:center;font-size:12px;line-height:14px;font-weight:bold;color:#416aa3">Extra Details</div>
<div style="left:355px;top:3px;width:103px;height:19px;background:linear-gradient(#f0f4fb,#d9e4f5);border:1px solid #a9c3e6;border-bottom:none;border-radius:3px 3px 0 0"></div>
<div class="t" style="left:355px;top:6px;width:103px;text-align:center;font-size:12px;line-height:14px;font-weight:bold;color:#416aa3">Pricing Levels</div>
<div style="left:462px;top:3px;width:103px;height:19px;background:linear-gradient(#f0f4fb,#d9e4f5);border:1px solid #a9c3e6;border-bottom:none;border-radius:3px 3px 0 0"></div>
<div class="t" style="left:462px;top:6px;width:103px;text-align:center;font-size:12px;line-height:14px;font-weight:bold;color:#416aa3">Properties</div>
<div style="left:569px;top:3px;width:128px;height:19px;background:linear-gradient(#f0f4fb,#d9e4f5);border:1px solid #a9c3e6;border-bottom:none;border-radius:3px 3px 0 0"></div>
<div class="t" style="left:569px;top:6px;width:128px;text-align:center;font-size:12px;line-height:14px;font-weight:bold;color:#416aa3">Comment / Replace</div>
<div style="left:700px;top:3px;width:110px;height:19px;background:linear-gradient(#f0f4fb,#d9e4f5);border:1px solid #a9c3e6;border-bottom:none;border-radius:3px 3px 0 0"></div>
<div class="t" style="left:700px;top:6px;width:110px;text-align:center;font-size:12px;line-height:14px;font-weight:bold;color:#416aa3">Custom Fields</div>
</div>
<div class="t" style="left:209px;top:322.84px;font-size:12px;line-height:12px;color:#111;font-weight:normal;">Inventory Code:</div>
<div style="left:314px;top:319px;width:225px;height:22px;background:linear-gradient(#f4f4f4,#fff 4px);border:1px solid #b5b8c8"></div>
<div class="t" style="left:318px;top:324.84px;font-size:12px;line-height:12px;color:#111;font-weight:normal;transform:scaleX(0.94);transform-origin:0 0;">CAS/CS/BASIC-123</div>
<div class="t" style="left:209px;top:349.84px;font-size:12px;line-height:12px;color:#111;font-weight:normal;">Category:</div>
<div style="left:314px;top:346px;width:225px;height:22px;background:linear-gradient(#f4f4f4,#fff 4px);border:1px solid #b5b8c8"></div>
<div class="t" style="left:318px;top:351.84px;font-size:12px;line-height:12px;color:#111;font-weight:normal;transform:scaleX(0.94);transform-origin:0 0;">Stock</div>
<div class="t" style="left:209px;top:376.84px;font-size:12px;line-height:12px;color:#111;font-weight:normal;">Description:</div>
<div style="left:314px;top:375px;width:225px;height:36px;background:linear-gradient(#f4f4f4,#fff 4px);border:1px solid #b5b8c8"></div>
<div class="t" style="left:318px;top:378.84px;font-size:12px;line-height:12px;color:#111;font-weight:normal;transform:scaleX(0.94);transform-origin:0 0;">Case Black Basic</div>
<div class="t" style="left:209px;top:421.84px;font-size:12px;line-height:12px;color:#111;font-weight:normal;">Long Description:</div>
<div style="left:314px;top:420px;width:225px;height:96px;background:linear-gradient(#f4f4f4,#fff 4px);border:1px solid #b5b8c8"></div>
<div class="t" style="left:317px;top:423.84px;font-size:12px;line-height:12px;color:#111;font-weight:normal;transform:scaleX(0.967);transform-origin:0 0;">Corsair SPEC 01 ATX Compact Gaming</div>
<div class="t" style="left:317px;top:437.69px;font-size:12px;line-height:12px;color:#111;font-weight:normal;transform:scaleX(0.99);transform-origin:0 0;">Chassis | Black I/O: 1x USB 3.0 1x USB</div>
<div class="t" style="left:317px;top:451.54px;font-size:12px;line-height:12px;color:#111;font-weight:normal;transform:scaleX(0.99);transform-origin:0 0;">2.0 1x Headphone 1x Mic Power Reset</div>
<div class="t" style="left:209px;top:526.84px;font-size:12px;line-height:12px;color:#111;font-weight:normal;">Group Code:</div>
<div style="left:314px;top:523px;width:225px;height:22px;background:linear-gradient(#f4f4f4,#fff 4px);border:1px solid #b5b8c8"></div>
<div class="t" style="left:318px;top:528.64px;font-size:12px;line-height:12px;color:#111;font-weight:normal;transform:scaleX(0.94);transform-origin:0 0;">HWARE - Hardware</div>
<div style="left:521px;top:523px;width:18px;height:22px;background:linear-gradient(#fafafa,#f0f0f0 35%,#d6d6d6);border:1px solid #b5b8c8;border-radius:0 3px 3px 0"></div>
<svg style="left:525px;top:530px" width="11" height="7" viewBox="0 0 11 7"><path d="M1.2 1.2L5.5 5.4L9.8 1.2" fill="none" stroke="#1d3f8a" stroke-width="2.4"/></svg>
<div class="t" style="left:209px;top:553.84px;font-size:12px;line-height:12px;color:#111;font-weight:normal;">Stock Category:</div>
<div style="left:314px;top:550px;width:225px;height:22px;background:linear-gradient(#f4f4f4,#fff 4px);border:1px solid #b5b8c8"></div>
<div style="left:521px;top:550px;width:18px;height:22px;background:linear-gradient(#fafafa,#f0f0f0 35%,#d6d6d6);border:1px solid #b5b8c8;border-radius:0 3px 3px 0"></div>
<svg style="left:525px;top:557px" width="11" height="7" viewBox="0 0 11 7"><path d="M1.2 1.2L5.5 5.4L9.8 1.2" fill="none" stroke="#1d3f8a" stroke-width="2.4"/></svg>
<div class="t" style="left:209px;top:580.84px;font-size:12px;line-height:12px;color:#111;font-weight:normal;">Priority Level:</div>
<div style="left:314px;top:577px;width:225px;height:22px;background:linear-gradient(#f4f4f4,#fff 4px);border:1px solid #b5b8c8"></div>
<div style="left:521px;top:577px;width:18px;height:22px;background:linear-gradient(#fafafa,#f0f0f0 35%,#d6d6d6);border:1px solid #b5b8c8;border-radius:0 3px 3px 0"></div>
<svg style="left:525px;top:584px" width="11" height="7" viewBox="0 0 11 7"><path d="M1.2 1.2L5.5 5.4L9.8 1.2" fill="none" stroke="#1d3f8a" stroke-width="2.4"/></svg>
<div class="t" style="left:209px;top:607.84px;font-size:12px;line-height:12px;color:#111;font-weight:normal;">Bar Code:</div>
<div style="left:314px;top:604px;width:137px;height:22px;background:linear-gradient(#f4f4f4,#fff 4px);border:1px solid #b5b8c8"></div>
<div class="t" style="left:318px;top:609.64px;font-size:12px;line-height:12px;color:#111;font-weight:normal;transform:scaleX(0.94);transform-origin:0 0;">GL9584</div>
<div class="t" style="left:456px;top:607.84px;font-size:12px;line-height:12px;color:#111;font-weight:normal;">6</div>
<div style="left:488px;top:604px;width:52px;height:22px;background:linear-gradient(#fafafa,#f1f1f1 48%,#e3e3e3 52%,#e6e6e6);border:1px solid #cdd2da;border-radius:3px"></div>
<svg style="left:490px;top:609px" width="17" height="12" viewBox="0 0 17 12"><g fill="#111"><rect x="0.7" width="1.1" height="12"/><rect x="3" width="1.3" height="12"/><rect x="5.2" width="0.9" height="12"/><rect x="7" width="1.6" height="12"/><rect x="9.6" width="1" height="12"/><rect x="11.6" width="2" height="12"/><rect x="14.6" width="0.8" height="12"/><rect x="15.8" width="1.2" height="12"/></g></svg>
<div class="t" style="left:511px;top:609.69px;font-size:11px;line-height:11px;color:#222;font-weight:normal;">Print</div>
<div class="t" style="left:209px;top:634.84px;font-size:12px;line-height:12px;color:#111;font-weight:normal;">Version Number:</div>
<div style="left:314px;top:631px;width:85px;height:22px;background:linear-gradient(#f4f4f4,#fff 4px);border:1px solid #b5b8c8"></div>
<div class="t" style="left:409px;top:633.84px;font-size:12px;line-height:12px;color:#111;font-weight:normal;">Active:</div>
<div style="left:534px;top:633px;width:13px;height:13px;background:linear-gradient(135deg,#c4c7cc,#f4f5f6 70%);border:1px solid #8c8f96;box-shadow:inset 0 0 0 1px #fafafa"></div>
<svg style="left:536px;top:634px" width="10" height="11" viewBox="0 0 10 11"><path d="M1.5 6l2.5 3.2L8.8 1" fill="none" stroke="#3a4f9a" stroke-width="1.8"/></svg>
<div class="t" style="left:209px;top:660.84px;font-size:12px;line-height:12px;color:#111;font-weight:normal;">Sync To Mobile:</div>
<div style="left:314px;top:661px;width:13px;height:13px;background:linear-gradient(135deg,#c4c7cc,#f4f5f6 70%);border:1px solid #8c8f96;box-shadow:inset 0 0 0 1px #fafafa"></div>
<svg style="left:316px;top:662px" width="10" height="11" viewBox="0 0 10 11"><path d="M1.5 6l2.5 3.2L8.8 1" fill="none" stroke="#3a4f9a" stroke-width="1.8"/></svg>
<div class="t" style="left:409px;top:660.84px;font-size:12px;line-height:12px;color:#111;font-weight:normal;">Hide From Purchase:</div>
<div style="left:534px;top:661px;width:13px;height:13px;background:linear-gradient(135deg,#c4c7cc,#f4f5f6 70%);border:1px solid #8c8f96;box-shadow:inset 0 0 0 1px #fafafa"></div>
<div class="t" style="left:209px;top:681.84px;font-size:12px;line-height:12px;color:#111;font-weight:normal;">Sync to WebShop:</div>
<div style="left:314px;top:682px;width:13px;height:13px;background:linear-gradient(135deg,#c4c7cc,#f4f5f6 70%);border:1px solid #8c8f96;box-shadow:inset 0 0 0 1px #fafafa"></div>
<div class="t" style="left:409px;top:681.84px;font-size:12px;line-height:12px;color:#111;font-weight:normal;">Hide from Sale:</div>
<div style="left:534px;top:682px;width:13px;height:13px;background:linear-gradient(135deg,#c4c7cc,#f4f5f6 70%);border:1px solid #8c8f96;box-shadow:inset 0 0 0 1px #fafafa"></div>
<div class="t" style="left:209px;top:702.84px;font-size:12px;line-height:12px;color:#111;font-weight:normal;">WebShop Qty:</div>
<div style="left:314px;top:703px;width:13px;height:13px;background:linear-gradient(135deg,#c4c7cc,#f4f5f6 70%);border:1px solid #8c8f96;box-shadow:inset 0 0 0 1px #fafafa"></div>
<div class="t" style="left:209px;top:723.84px;font-size:12px;line-height:12px;color:#111;font-weight:normal;">Seasonal:</div>
<div style="left:314px;top:724px;width:13px;height:13px;background:linear-gradient(135deg,#c4c7cc,#f4f5f6 70%);border:1px solid #8c8f96;box-shadow:inset 0 0 0 1px #fafafa"></div>
<div class="t" style="left:409px;top:723.84px;font-size:12px;line-height:12px;color:#111;font-weight:normal;">Slow Mover:</div>
<div style="left:534px;top:724px;width:13px;height:13px;background:linear-gradient(135deg,#c4c7cc,#f4f5f6 70%);border:1px solid #8c8f96;box-shadow:inset 0 0 0 1px #fafafa"></div>
<div class="t" style="left:600px;top:659.84px;font-size:12px;line-height:12px;color:#111;font-weight:normal;">Primary Image:</div>
<div style="left:705px;top:656px;width:225px;height:22px;background:linear-gradient(#f4f4f4,#fff 4px);border:1px solid #b5b8c8"></div>
<div class="t" style="left:709px;top:661.64px;font-size:12px;line-height:12px;color:#111;font-weight:normal;transform:scaleX(0.94);transform-origin:0 0;">CC-9011050-WW</div>
<div style="left:912px;top:656px;width:18px;height:22px;background:linear-gradient(#fafafa,#f0f0f0 35%,#d6d6d6);border:1px solid #b5b8c8;border-radius:0 3px 3px 0"></div>
<svg style="left:916px;top:663px" width="11" height="7" viewBox="0 0 11 7"><path d="M1.2 1.2L5.5 5.4L9.8 1.2" fill="none" stroke="#1d3f8a" stroke-width="2.4"/></svg>
<div class="t" style="left:600px;top:686.84px;font-size:12px;line-height:12px;color:#111;font-weight:normal;">Thumbnail Image:</div>
<div style="left:705px;top:683px;width:225px;height:22px;background:linear-gradient(#f4f4f4,#fff 4px);border:1px solid #b5b8c8"></div>
<div class="t" style="left:709px;top:688.64px;font-size:12px;line-height:12px;color:#111;font-weight:normal;transform:scaleX(0.94);transform-origin:0 0;">CC-9011050-WW_01</div>
<div style="left:912px;top:683px;width:18px;height:22px;background:linear-gradient(#fafafa,#f0f0f0 35%,#d6d6d6);border:1px solid #b5b8c8;border-radius:0 3px 3px 0"></div>
<svg style="left:916px;top:690px" width="11" height="7" viewBox="0 0 11 7"><path d="M1.2 1.2L5.5 5.4L9.8 1.2" fill="none" stroke="#1d3f8a" stroke-width="2.4"/></svg>
<div class="t" style="left:600px;top:713.84px;font-size:12px;line-height:12px;color:#111;font-weight:normal;">Label:</div>
<div style="left:705px;top:710px;width:227px;height:22px;background:linear-gradient(#f4f4f4,#fff 4px);border:1px solid #b5b8c8"></div>
<div style="left:203px;top:741px;width:784px;height:2px;background:#99bbe8"></div>
<div style="left:203px;top:743px;width:784px;height:30px;background:#d9e2f6"></div>
<div style="left:209px;top:750px;width:88px;height:21px;background:linear-gradient(#fafafa,#f1f1f1 48%,#e3e3e3 52%,#e6e6e6);border:1px solid #cdd2da;border-radius:3px"></div>
<svg style="left:211px;top:752px" width="16" height="16" viewBox="0 0 16 16"><rect x="3" y="7.5" width="9.5" height="7" fill="#fff"/><path d="M0 0H3V6H12V0H13L16 2.6V15.8H0Z" fill="#d77ee8"/><rect x="3" y="7.7" width="9" height="6.9" fill="#fff"/><rect x="8.3" y="0.3" width="2.5" height="4.6" fill="#d77ee8"/></svg>
<div class="t" style="left:231px;top:754.69px;font-size:11px;line-height:11px;color:#8a8a8a;font-weight:normal;">Save &amp; <span class="ul">N</span>ew</div>
<div style="left:305px;top:750px;width:93px;height:21px;background:linear-gradient(#fafafa,#f1f1f1 48%,#e3e3e3 52%,#e6e6e6);border:1px solid #cdd2da;border-radius:3px"></div>
<svg style="left:307px;top:752px" width="16" height="16" viewBox="0 0 16 16"><rect x="3" y="7.5" width="9.5" height="7" fill="#fff"/><path d="M0 0H3V6H12V0H13L16 2.6V15.8H0Z" fill="#3a9a40"/><rect x="3" y="7.7" width="9" height="6.9" fill="#fff"/><rect x="8.3" y="0.3" width="2.5" height="4.6" fill="#3a9a40"/></svg>
<div class="t" style="left:327px;top:754.69px;font-size:11px;line-height:11px;color:#222;font-weight:normal;">Sa<span class="ul">v</span>e &amp; Close</div>
<div style="left:406px;top:750px;width:74px;height:21px;background:linear-gradient(#fafafa,#f1f1f1 48%,#e3e3e3 52%,#e6e6e6);border:1px solid #cdd2da;border-radius:3px"></div>
<svg style="left:408px;top:752px" width="16" height="16" viewBox="0 0 16 16"><rect x="3" y="7.5" width="9.5" height="7" fill="#fff"/><path d="M0 0H3V6H12V0H13L16 2.6V15.8H0Z" fill="#1f7ae0"/><rect x="3" y="7.7" width="9" height="6.9" fill="#fff"/><rect x="8.3" y="0.3" width="2.5" height="4.6" fill="#1f7ae0"/></svg>
<div class="t" style="left:438px;top:754.69px;font-size:11px;line-height:11px;color:#222;font-weight:normal;"><span class="ul">S</span>ave</div>
<div style="left:486px;top:750px;width:75px;height:21px;background:linear-gradient(#fafafa,#f1f1f1 48%,#e3e3e3 52%,#e6e6e6);border:1px solid #cdd2da;border-radius:3px"></div>
<svg style="left:489px;top:752px" width="16" height="16" viewBox="0 0 16 16"><path d="M4.7 0h6.6L16 4.7v6.6L11.3 16H4.7L0 11.3V4.7z" fill="#c8282d"/><path d="M5.2 1.3h5.6l3.9 3.9v5.6l-3.9 3.9H5.2l-3.9-3.9V5.2z" fill="#ef4a4e"/><path d="M5 5l6 6M11 5l-6 6" stroke="#fff" stroke-width="2.4"/></svg>
<div class="t" style="left:518px;top:754.69px;font-size:11px;line-height:11px;color:#222;font-weight:normal;"><span class="ul">C</span>lose</div>
<div style="left:869px;top:750px;width:111px;height:21px;background:linear-gradient(#fafafa,#f1f1f1 48%,#e3e3e3 52%,#e6e6e6);border:1px solid #cdd2da;border-radius:3px"></div>
<svg style="left:872px;top:755px" width="16" height="11" viewBox="0 0 16 11"><g fill="#2aa034"><rect x="3" y="0" width="4" height="3" rx="0.6"/><rect x="9" y="0" width="4" height="3" rx="0.6"/><rect x="0" y="4" width="4" height="3" rx="0.6"/><rect x="6" y="4" width="4" height="3" rx="0.6"/><rect x="12" y="4" width="4" height="3" rx="0.6"/><rect x="3" y="8" width="4" height="3" rx="0.6"/><rect x="9" y="8" width="4" height="3" rx="0.6"/></g></svg>
<div class="t" style="left:892px;top:754.69px;font-size:11px;line-height:11px;color:#222;font-weight:normal;"><span class="ul">R</span>ecalculate Item</div>

<svg style="left:0;top:0" width="994" height="779" viewBox="0 0 994 779">
 <defs>
  <linearGradient id="side" x1="0" y1="0" x2="1" y2="0.3"><stop offset="0" stop-color="#1c1c1c"/><stop offset="0.75" stop-color="#242424"/><stop offset="1" stop-color="#343434"/></linearGradient>
  <linearGradient id="glass" x1="0" y1="0" x2="1" y2="1"><stop offset="0" stop-color="#8c8c8c"/><stop offset="0.35" stop-color="#5a4c4c"/><stop offset="1" stop-color="#2e2e2e"/></linearGradient>
  <linearGradient id="bay" x1="0" y1="0" x2="1" y2="0"><stop offset="0" stop-color="#2a2a2a"/><stop offset="1" stop-color="#3a3a3a"/></linearGradient>
  <linearGradient id="glow2" x1="0" y1="0" x2="0" y2="1"><stop offset="0" stop-color="#681010"/><stop offset="0.12" stop-color="#7a1010"/><stop offset="0.33" stop-color="#9a1414"/><stop offset="0.42" stop-color="#4a0a0a"/><stop offset="0.5" stop-color="#141010"/><stop offset="1" stop-color="#0c0c0c"/></linearGradient>
  <radialGradient id="glow" cx="0.45" cy="0.5" r="0.6"><stop offset="0" stop-color="#d01818"/><stop offset="0.6" stop-color="#8a1010"/><stop offset="1" stop-color="#2a0505"/></radialGradient>
  <radialGradient id="fan" cx="0.5" cy="0.5" r="0.5"><stop offset="0" stop-color="#3a2020"/><stop offset="0.3" stop-color="#6a4040"/><stop offset="0.5" stop-color="#9a6a6a"/><stop offset="1" stop-color="#7a4a4a"/></radialGradient>
 </defs>
 <!-- side panel -->
 <path d="M682 401 L805 335 L805 632 L788 629 L682 586 Z" fill="url(#side)"/>
 <path d="M682 401 L805 335" stroke="#3a3a3a" stroke-width="1"/>
 <path d="M686 408 L805 345" stroke="#151515" stroke-width="1"/>
 <!-- window recess -->
 <path d="M691 421 L777 385 L777 598 L691 571 Z" fill="#151515"/>
 <path d="M691 421 L777 385" stroke="#2c2c2c" stroke-width="1"/>
 <clipPath id="gl"><path d="M692 431.5 L765 405 L765 577 L692 561 Z"/></clipPath>
 <g clip-path="url(#gl)">
  <rect x="690" y="400" width="80" height="180" fill="#2e2828"/>
  <path d="M692 431 L765 405 L765 470 L692 490 Z" fill="#5a5050"/>
  <path d="M692 431 L720 421 L700 470 L692 474 Z" fill="#9a9696" opacity="0.8"/>
  <circle cx="728.5" cy="447" r="21" fill="#7e5a5c"/>
  <circle cx="728.5" cy="447" r="21" fill="none" stroke="#4a3234" stroke-width="2"/>
  <path d="M728.5 447 L712 458 M728.5 447 L722 426 M728.5 447 L747 438 M728.5 447 L740 465" stroke="#946e70" stroke-width="2"/>
  <circle cx="728.5" cy="445" r="7.5" fill="#3a2a2c"/>
  <circle cx="729" cy="444" r="2.2" fill="#c8b8b8"/>
  <path d="M745 416 Q742 440 750 466" stroke="#1e1e1e" stroke-width="6" fill="none"/>
  <path d="M755 408 L755 466" stroke="#8a8a8a" stroke-width="2"/>
  <path d="M705 455 L718 452 L718 470 L705 472 Z" fill="#6a1c1c"/>
  <path d="M692 477 L765 467" stroke="#1c1818" stroke-width="4"/>
  <path d="M703 485 L765 478" stroke="#5a1c1c" stroke-width="1.5"/>
  <path d="M705 491 L765 487" stroke="#7a6a3a" stroke-width="1"/>
  <path d="M707 497 L738 495" stroke="#b42830" stroke-width="5"/>
  <path d="M707 500 L740 498 L740 540 L707 542 Z" fill="#221c1c"/>
  <path d="M742 497 L765 495 L765 545 L742 546 Z" fill="#2c2424"/>
  <path d="M750 510 H762 M752 530 H762" stroke="#8a2424" stroke-width="3"/>
  <path d="M692 548 L740 544 L765 547 L765 580 L692 565 Z" fill="#444"/>
  <path d="M692 556 L740 552" stroke="#5a5a5a" stroke-width="1"/>
  <rect x="722" y="557" width="2" height="4" fill="#c8b040"/>
 </g>
 <!-- front bezel -->
 <path d="M805 335 L825 333 L896 356 L901.5 367 L901.5 599 L890 614 L825 632 L805 637 Z" fill="#1a1a1a"/>
 <path d="M825 333 L896 356 L901.5 367 L829 355 Z" fill="#262626"/>
 <path d="M828 336 L894 358" stroke="#3a3a3a" stroke-width="1"/>
 <path d="M845 341.5 L880 352.7" stroke="#d8303a" stroke-width="2.2"/>
 <path d="M836 347 L842 349" stroke="#666" stroke-width="1.5"/>
 <path d="M850 352 L856 354 M862 356 L866 357" stroke="#555" stroke-width="1.2"/>
 <circle cx="877" cy="359" r="1.6" fill="#3868d8"/>
 <path d="M887 361 L893 364" stroke="#555" stroke-width="1.5"/>
 <!-- bay panel -->
 <path d="M829 355 L901.5 367 L901.5 436 L829 424 Z" fill="url(#bay)"/>
 <path d="M829 388 L901.5 403" stroke="#151515" stroke-width="1.3"/>
 <path d="M829 420 L901.5 431" stroke="#151515" stroke-width="1.3"/>
 <path d="M805 340 L829 355 L829 424 L817 412 L809 399 L809 382 L817 365 L805 352 Z" fill="#141414"/>
 <path d="M829 357 L817 365 L809 382 L809 399 L817 412 L829 421" stroke="#3c3c3c" stroke-width="1.2" fill="none"/>
 <!-- grille -->
 <path d="M832 442 Q832 432 844 432 L888 437 Q901 440 901.5 448 L901.5 599 L890 614 L840 628 L832 620 Z" fill="#161616"/>
 <path d="M832.5 620 L832.5 442 Q832.5 432.5 844 432.5 L888 437.5" stroke="#333" stroke-width="1" fill="none"/>
 <path d="M840 440 L891 444 L891 611 L840 624 Z" fill="url(#glow2)"/>
 <g stroke="#1a1a1a" stroke-width="4" fill="none">
  <path d="M846 439 Q849 441 849 446 L849 623"/><path d="M853.5 440 Q856.5 442 856.5 447 L856.5 621"/><path d="M860.5 441 Q863.5 443 863.5 448 L863.5 619"/><path d="M867.5 442 Q870.5 444 870.5 449 L870.5 617"/><path d="M874 442 Q877 444 877 449 L877 615"/><path d="M880.5 443 Q883.5 445 883.5 450 L883.5 613"/><path d="M887 444 Q890 446 890 451 L890 611"/>
 </g>
 <g stroke="#4a4a4a" stroke-width="0.9" fill="none">
  <path d="M846 438.5 Q847.5 441 847.5 446 L847.5 623"/><path d="M853.5 439.5 Q855 442 855 447 L855 621"/><path d="M860.5 440.5 Q862 443 862 448 L862 619"/><path d="M867.5 441.5 Q869 444 869 449 L869 617"/><path d="M874 441.5 Q875.5 444 875.5 449 L875.5 615"/><path d="M880.5 442.5 Q882 445 882 450 L882 613"/><path d="M887 443.5 Q888.5 446 888.5 451 L888.5 611"/>
 </g>
 <rect x="866" y="581" width="11" height="18" fill="#222"/>
 <path d="M869 592 L874 584 L874 590 Z" fill="#bbb"/>
 <path d="M868 596 H875" stroke="#888" stroke-width="1"/>
 <ellipse cx="696" cy="591" rx="6" ry="3" fill="#111"/>
 <path d="M787 629 H807 V635 Q797 639 787 635 Z" fill="#0e0e0e"/>
</svg>

</body></html>
